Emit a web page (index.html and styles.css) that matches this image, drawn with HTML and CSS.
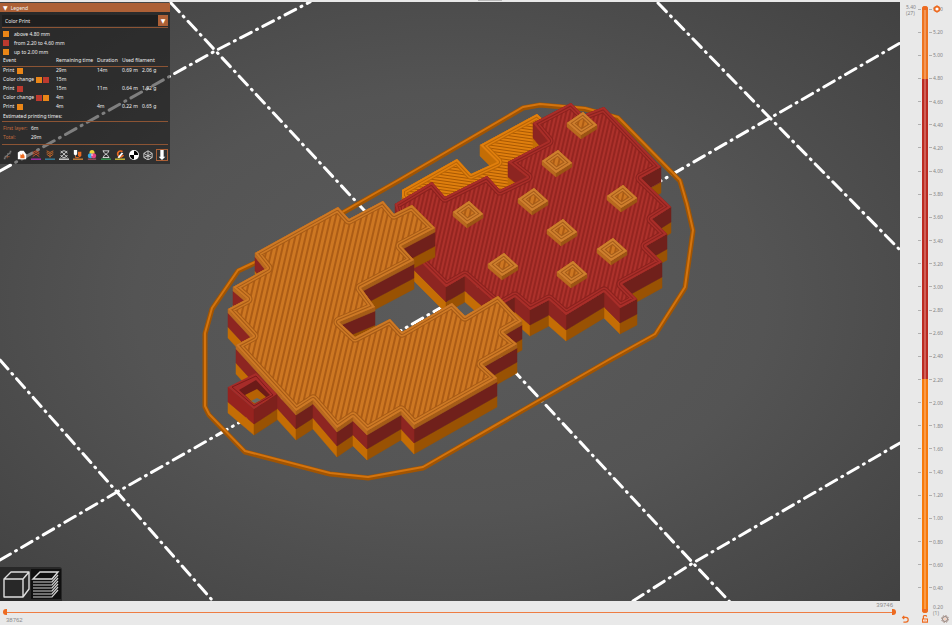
FILE: index.html
```html
<!DOCTYPE html>
<html lang="en">
<head>
  <meta charset="UTF-8">
  <meta name="viewport" content="width=device-width, initial-scale=1.0">
  <title>Preview</title>
  <link rel="stylesheet" href="styles.css">
</head>
<body>
  <div class="app">
    <main class="viewport">
      <svg class="scene" viewBox="0 2 900 599" preserveAspectRatio="xMidYMid slice" role="img" aria-label="Sliced model">
        <defs>
          <radialGradient id="bed" cx="50%" cy="50%" r="70%">
            <stop offset="0" stop-color="#5b5b5b"/>
            <stop offset="0.5" stop-color="#545454"/>
            <stop offset="1" stop-color="#424242"/>
          </radialGradient>
          <pattern id="hatch-top" width="5" height="5" patternUnits="userSpaceOnUse" patternTransform="rotate(13)">
            <rect width="5" height="5" fill="#cd7722"/>
            <rect width="2" height="5" fill="#ac5c15"/>
          </pattern>
          <pattern id="hatch-red" width="4" height="4" patternUnits="userSpaceOnUse" patternTransform="rotate(13)">
            <rect width="4" height="4" fill="#ad312b"/>
            <rect width="2" height="4" fill="#942520"/>
          </pattern>
          <pattern id="hatch-low" width="4" height="3" patternUnits="userSpaceOnUse" patternTransform="rotate(8)">
            <rect width="4" height="3" fill="#e07f0d"/>
            <rect width="4" height="1" fill="#a85803"/>
          </pattern>
        </defs>
        <rect y="2" width="900" height="599" fill="url(#bed)"/>
        <g class="grid-lines">
          <path d="M171 3L693 563L730 602"/>
          <path d="M658 3L770 118L900 250"/>
          <path d="M0 360L117 492L212 600"/>
          <path d="M0 560L117 492L402 330L770 118L900 43"/>
          <path d="M0 171L215 51L310 2"/>
          <path d="M633 601L693 563L900 443"/>
        </g>
        <g class="skirt">
          <path class="skirt-side" d="M255 263L238 271L212 309L205 334V407L209 415L245 452L330 474L368 478L423 468L610 360L655 335L685 288L693 231L687 205L680 181L618 118L585 109L540 105L523 108L400 180L255 263"/>
          <path class="skirt-top" d="M255 262L238 270L212 308L205 333V406L209 414L245 451L330 473L368 477L423 467L610 359L655 334L685 287L693 230L687 204L680 180L618 117L585 108L540 104L523 107L400 179L255 262"/>
        </g>
        <g id="model"></g>
      </svg>

      <section class="legend">
        <h1 class="legend-title"><span class="arrow">▼</span> Legend</h1>
        <div class="legend-body">
          <div class="combo">
            <select aria-label="View type">
              <option>Color Print</option>
            </select>
            <span class="combo-arrow">▼</span>
          </div>
          <ul class="colors">
            <li><i class="swatch orange"></i>above 4.80 mm</li>
            <li><i class="swatch red"></i>from 2.20 to 4.60 mm</li>
            <li><i class="swatch orange"></i>up to 2.00 mm</li>
          </ul>
          <table class="events">
            <colgroup>
              <col class="c-event">
              <col class="c-time">
              <col class="c-dur">
              <col class="c-len">
              <col>
            </colgroup>
            <thead>
              <tr><th>Event</th><th>Remaining time</th><th>Duration</th><th colspan="2">Used filament</th></tr>
            </thead>
            <tbody>
              <tr><td>Print <i class="swatch orange"></i></td><td>29m</td><td>14m</td><td>0.69 m</td><td>2.06 g</td></tr>
              <tr><td>Color change <i class="swatch orange"></i><i class="swatch red"></i></td><td>15m</td><td></td><td></td><td></td></tr>
              <tr><td>Print <i class="swatch red"></i></td><td>15m</td><td>11m</td><td>0.64 m</td><td>1.92 g</td></tr>
              <tr><td>Color change <i class="swatch red"></i><i class="swatch orange"></i></td><td>4m</td><td></td><td></td><td></td></tr>
              <tr><td>Print <i class="swatch orange"></i></td><td>4m</td><td>4m</td><td>0.22 m</td><td>0.65 g</td></tr>
            </tbody>
          </table>
          <h2 class="times-title">Estimated printing times:</h2>
          <dl class="times">
            <dt>First layer:</dt><dd>6m</dd>
            <dt>Total:</dt><dd>29m</dd>
          </dl>
          <div class="tools">
            <button aria-label="Travel"><svg viewBox="0 0 12 12"><path d="M1 10h2V7h3V4h3V1" stroke="#777" stroke-width="2" stroke-dasharray="2 1" fill="none"/><path d="M5 10V8h3" stroke="#a35533" fill="none"/></svg></button>
            <button aria-label="Wipe"><svg viewBox="0 0 12 12"><path d="M1 11V3l3-2h4l3 4v6z" fill="#fff"/><path d="M4 10V5l2 1 1-2 2 3v3z" fill="#ed6b21"/></svg></button>
            <button aria-label="Retractions"><svg viewBox="0 0 12 12"><path d="M2 3l4-2 4 2M2 5l4-2 4 2M2 8l4-3 4 3" stroke="#c4532d" stroke-width="1.2" fill="none"/><path d="M0 11h12" stroke="#b82fbd" stroke-width="1.5"/></svg></button>
            <button aria-label="Deretractions"><svg viewBox="0 0 12 12"><path d="M2 1l4 2 4-2M2 3l4 2 4-2M2 5l4 3 4-3M6 5v4" stroke="#bd6428" stroke-width="1.2" fill="none"/><path d="M0 11h12" stroke="#3d8fad" stroke-width="1.5"/></svg></button>
            <button aria-label="Seams"><svg viewBox="0 0 12 12"><path d="M2 1l8 8M10 1L2 9M2 4c2-4 6-4 8 0M2 6c2 4 6 4 8 0" stroke="#eee" fill="none"/><path d="M0 11h12" stroke="#eee" stroke-width="1.5"/></svg></button>
            <button aria-label="Tool changes"><svg viewBox="0 0 12 12"><path d="M1 0h4v5L3 7 1 5z" fill="#fff"/><path d="M6 2h4v5L8 9 6 7z" fill="#ed6b21"/><path d="M3 7v2h4" stroke="#ed6b21" fill="none"/><path d="M0 11h12" stroke="#e0903d" stroke-width="1.5"/></svg></button>
            <button aria-label="Color changes"><svg viewBox="0 0 12 12"><circle cx="6" cy="3" r="3" fill="#f0d43a"/><circle cx="4" cy="7" r="3" fill="#36a9e1"/><circle cx="8" cy="7" r="3" fill="#e24587"/><circle cx="6" cy="6" r="1" fill="#fff"/><path d="M1 11h10" stroke="#d56a7c"/></svg></button>
            <button aria-label="Pause prints"><svg viewBox="0 0 12 12"><path d="M2 1h8M2 9h8M3 1c0 3 2 3 3 4 1-1 3-1 3-4M3 9c0-3 2-3 3-4 1 1 3 1 3 4" stroke="#eee" fill="none"/><path d="M0 11h12" stroke="#35a853" stroke-width="1.5"/></svg></button>
            <button aria-label="Custom G-codes"><svg viewBox="0 0 12 12"><path d="M9 2a3.5 3.5 0 1 0 1 4" stroke="#ed6b21" stroke-width="2" fill="none"/><path d="M3 9l5-6 2 1-5 6z" fill="#fff"/><path d="M0 11h12" stroke="#ded33b" stroke-width="1.5"/></svg></button>
            <button aria-label="Center of gravity"><svg viewBox="0 0 12 12"><circle cx="6" cy="6" r="6" fill="#fff"/><path d="M6 6V1a5 5 0 0 1 5 5zM6 6v5a5 5 0 0 1-5-5z" fill="#000"/></svg></button>
            <button aria-label="Shells"><svg viewBox="0 0 12 12"><path d="M6 1l5 3v5l-5 3-5-3V4zM1 4l5 3 5-3M6 7v5M6 1v6L1 9M6 7l5 2" stroke="#ddd" fill="none"/></svg></button>
            <button class="active" aria-label="Tool marker"><svg viewBox="0 0 12 12"><path d="M4 0h4v8h2l-4 4-4-4h2z" fill="#fff"/></svg></button>
          </div>
        </div>
      </section>

      <nav class="views">
        <button aria-label="3D editor view">
          <svg viewBox="0 0 30 30"><path d="M3 10h19v18H3zM3 10l7-7h18l-6 7M28 3v17l-6 8" stroke="#ddd" stroke-width="1.4" fill="none" stroke-linejoin="round"/></svg>
        </button>
        <button class="active" aria-label="Preview">
          <svg viewBox="0 0 30 30"><path d="M2 10L9 3h18l-6 7z" stroke="#ddd" stroke-width="1.4" fill="none"/><path d="M2 13h19l6-7M2 16h19l6-7M2 19h19l6-7M2 22h19l6-7M2 25h19l6-7M2 28h19l6-7" stroke="#d0d0d0" stroke-width="1.2" fill="none"/></svg>
        </button>
      </nav>
    </main>

    <footer class="moves">
      <output class="move-high">39746</output>
      <div class="move-track">
        <input class="low" type="range" min="0" max="100" value="0" aria-label="First move">
        <input class="high" type="range" min="0" max="100" value="100" aria-label="Last move">
      </div>
      <output class="move-low">38762</output>
    </footer>

    <aside class="layers">
      <div class="layer-slider">
        <div class="layer-current">5.40<br>(27)</div>
        <div class="layer-track">
          <input class="low" type="range" min="1" max="27" value="1" aria-label="Bottom layer">
          <input class="high" type="range" min="1" max="27" value="27" aria-label="Top layer">
        </div>
        <ol class="layer-scale" id="scale"></ol>
        <button class="layer-settings" aria-label="Edit color"><svg viewBox="0 0 10 10"><circle cx="5" cy="5" r="3" fill="#fff" stroke="#ed6b21" stroke-width="2"/><path d="M5 0v2M5 8v2M0 5h2M8 5h2" stroke="#ed6b21"/></svg></button>
      </div>
      <div class="layer-bottom">0.20<br>(1)</div>
      <div class="layer-tools">
        <button aria-label="Discard changes"><svg viewBox="0 0 10 10"><path d="M3 3h3a2.5 2.5 0 0 1 0 6H3M4 1L2 3l2 2" stroke="#ed6b21" stroke-width="1.5" fill="none"/></svg></button>
        <button aria-label="One layer lock"><svg viewBox="0 0 10 10"><path d="M2 5h6v4H2z" fill="#fff" stroke="#ed6b21" stroke-width="1.5"/><path d="M3 5V3a2 2 0 0 1 4-1" stroke="#ed6b21" stroke-width="1.5" fill="none"/><path d="M5 6v2" stroke="#ed6b21"/></svg></button>
        <button aria-label="Slider settings"><svg viewBox="0 0 10 10"><circle cx="5" cy="5" r="3" fill="#fff" stroke="#a08c84" stroke-width="1.5"/><circle cx="5" cy="5" r="4.5" fill="none" stroke="#a08c84" stroke-dasharray="2 1.5"/><circle cx="5" cy="5" r="1" fill="#ed9a70"/></svg></button>
      </div>
    </aside>
  </div>
  <script src="script.js"></script>
</body>
</html>
```
FILE: styles.css
```css
* {
  box-sizing: border-box;
}

body {
  margin: 0;
  height: 100vh;
  background-color: #e9e9e9;
  font-family: "Noto Sans", "Open Sans", sans-serif;
  font-size: 5px;
  overflow: hidden;
}

button {
  display: flex;
  align-items: center;
  justify-content: center;
  padding: 0;
  border: none;
  background: none;
  cursor: pointer;
}

.app {
  display: grid;
  grid-template-columns: 1fr 52px;
  grid-template-rows: 1fr 24px;
  height: 100%;
  padding-top: 2px;
  background: linear-gradient(#b9b9b9, #b9b9b9) 51.5% 0 / 24px 1px no-repeat;
}

/* 3D view */
.viewport {
  position: relative;
  min-height: 0;
  overflow: hidden;
  background-color: #4a4a4a;
}

.scene {
  display: block;
  width: 100%;
  height: 100%;
}

.grid-lines path {
  fill: none;
  stroke: #fff;
  stroke-width: 3;
  stroke-linecap: round;
  stroke-dasharray: 12 6 1 6;
}

.skirt path {
  fill: none;
  stroke-linejoin: round;
}

.skirt-side {
  stroke: #a05403;
  stroke-width: 5;
}

.skirt-top {
  stroke: #d3740f;
  stroke-width: 2;
}

/* legend */
.legend {
  position: absolute;
  top: 1px;
  left: 0;
  width: 170px;
  background-color: rgba(22, 22, 22, 0.55);
  color: #eee;
}

.legend-title {
  display: flex;
  align-items: center;
  gap: 3px;
  height: 9px;
  margin: 0;
  padding-left: 3px;
  background-color: #ad6036;
  font-size: 5px;
  font-weight: normal;
}

.legend-title .arrow,
.combo-arrow {
  color: #fff;
  font-family: "DejaVu Sans", sans-serif;
  font-size: 6px;
}

.legend-body {
  padding: 3px 2px;
}

.combo {
  display: grid;
  grid-template-columns: 1fr 10px;
  height: 11px;
  margin-bottom: 1px;
  background-color: #1f1f1f;
}

.combo select {
  appearance: none;
  padding: 0 3px;
  border: none;
  background: none;
  color: #eee;
  font: inherit;
}

.combo-arrow {
  display: flex;
  align-items: center;
  justify-content: center;
  background-color: #ad6036;
}

.colors {
  margin: 0;
  padding: 1px 1px 0;
  border-top: 1px solid #8c5434;
  list-style: none;
}

.colors li {
  display: flex;
  align-items: center;
  gap: 4px;
  height: 9px;
}

.swatch {
  display: inline-block;
  width: 6px;
  height: 6px;
  margin-right: 1px;
  vertical-align: middle;
}

.orange {
  background-color: #ea8617;
}

.red {
  background-color: #bd3a2f;
}

.events {
  width: 100%;
  border-collapse: collapse;
  table-layout: fixed;
  line-height: 7px;
}

.events th,
.events td {
  height: 9px;
  padding: 0;
  font-weight: normal;
  text-align: left;
  white-space: nowrap;
}

.events thead th {
  height: 10px;
}

.events td:first-child,
.events th:first-child {
  padding-left: 1px;
}

.events .swatch {
  margin-left: 1px;
  margin-right: 0;
}

.events thead {
  border-bottom: 1px solid #8c5434;
}

.c-event {
  width: 54px;
}

.c-time {
  width: 41px;
}

.c-dur {
  width: 25px;
}

.c-len {
  width: 20px;
}

.times-title {
  height: 11px;
  margin: 0;
  padding-left: 1px;
  border-bottom: 1px solid #8c5434;
  font-size: 5px;
  font-weight: normal;
  line-height: 10px;
}

.times {
  display: grid;
  grid-template-columns: 28px 1fr;
  margin: 0;
  padding: 2px 1px;
  border-bottom: 1px solid #8c5434;
  line-height: 9px;
}

.times dt {
  color: #c06a3d;
}

.times dd {
  margin: 0;
}

.tools {
  display: flex;
  justify-content: space-between;
  padding-top: 4px;
}

.tools button {
  width: 12px;
  height: 12px;
}

.tools svg {
  width: 10px;
  height: 10px;
}

.tools .active {
  border: 1px solid #ad6036;
}

/* view switch */
.views {
  position: absolute;
  bottom: 0;
  left: 0;
  display: flex;
  padding: 2px 1px;
  background-color: #282828;
  border-radius: 0 3px 0 0;
}

.views button {
  width: 30px;
  height: 30px;
}

.views .active {
  background-color: #101010;
}

.views svg {
  width: 30px;
  height: 30px;
}

/* horizontal slider */
.moves {
  display: grid;
  grid-template-rows: 8px 6px 10px;
  padding: 0 4px 0 3px;
  color: #8c8c8c;
  font-family: "Liberation Sans", Arial, sans-serif;
  font-size: 6px;
}

.move-high {
  padding-right: 3px;
  text-align: right;
  line-height: 9px;
}

.move-low {
  padding-left: 3px;
  line-height: 10px;
}

.move-track {
  display: grid;
  background: linear-gradient(#ee7d43, #ee7d43) center / 100% 1px no-repeat;
}

input[type="range"] {
  grid-area: 1 / 1;
  appearance: none;
  margin: 0;
  background: none;
  pointer-events: none;
}

input[type="range"]::-webkit-slider-thumb {
  appearance: none;
  width: 4px;
  height: 6px;
  background-color: #ed6b21;
  pointer-events: auto;
}

.move-track input {
  width: 100%;
  height: 6px;
}

.move-track .low::-webkit-slider-thumb {
  border-radius: 4px 0 0 4px;
}

.move-track .high::-webkit-slider-thumb {
  border-radius: 0 4px 4px 0;
}

/* vertical slider */
.layers {
  display: grid;
  grid-template-rows: 1fr 12px;
  grid-row: 1 / 3;
  grid-column: 2;
  position: relative;
  color: #858585;
}

.layer-slider {
  display: grid;
  grid-template-columns: 18px 14px 1fr;
  min-height: 0;
  padding-top: 4px;
}

.layer-current {
  padding-left: 6px;
  line-height: 6px;
  margin-top: -2px;
}

.layer-track {
  display: grid;
  justify-self: center;
  width: 6px;
  border-radius: 3px;
  background:
    linear-gradient(rgba(255, 255, 255, 0.25), rgba(255, 255, 255, 0.25)) center / 2px 100% no-repeat,
    linear-gradient(#ee7420 12%, #bd2c22 12%, #bd2c22 61.5%, #f77a0c 61.5%);
}

.layer-track input {
  width: 6px;
  height: 100%;
  min-height: 0;
  writing-mode: vertical-lr;
  direction: rtl;
}

.layer-track input::-webkit-slider-thumb {
  width: 6px;
  height: 4px;
}

.layer-track .low::-webkit-slider-thumb {
  border-radius: 0 0 3px 3px;
}

.layer-track .high::-webkit-slider-thumb {
  border-radius: 3px 3px 0 0;
}

.layer-scale {
  display: flex;
  flex-direction: column;
  justify-content: space-between;
  margin: 0 0 22px -14px;
  padding: 0;
  list-style: none;
  line-height: 6px;
}

.layer-scale li {
  display: flex;
  align-items: center;
  height: 6px;
}

.layer-scale li::before,
.layer-scale li::after {
  content: "";
  order: 0;
  width: 3px;
  height: 1px;
  background-color: #b0b0b0;
}

.layer-scale li::after {
  order: 1;
  margin-left: 8px;
}

.layer-scale span {
  order: 2;
  padding-left: 1px;
}

.layer-settings {
  position: absolute;
  top: 3px;
  left: 33px;
  width: 8px;
  height: 8px;
}

.layer-settings svg {
  width: 8px;
  height: 8px;
}

.layer-bottom {
  position: absolute;
  right: 9px;
  bottom: 9px;
  line-height: 6px;
}

.layer-tools {
  display: flex;
  justify-content: space-between;
  padding-right: 2px;
}

.layer-tools button {
  width: 10px;
  height: 12px;
}

.layer-tools svg {
  width: 8px;
  height: 8px;
}
```
FILE: script.js
```js
const NS = 'http://www.w3.org/2000/svg';
const model = document.getElementById('model');
let clipCount = 0;

function add(parent, name, attrs) {
  const el = document.createElementNS(NS, name);
  for (const key in attrs) el.setAttribute(key, attrs[key]);
  parent.appendChild(el);
  return el;
}

// bands: [from, to, left facing colour, right facing colour]
const ORANGE_BASE = ['#c46d05', '#995203'];
const RED = ['#8d2521', '#70201b'];

// points go clockwise, so every edge that runs to the left faces the viewer
function walls(points, bands) {
  const edges = [];
  points.forEach((a, i) => {
    const b = points[(i + 1) % points.length];
    if (b[0] < a[0]) edges.push([a, b]);
  });
  edges.sort((e, f) => (e[0][1] + e[1][1]) - (f[0][1] + f[1][1]));
  for (const [a, b] of edges) {
    for (const [from, to, left, right] of bands) {
      const fill = b[1] < a[1] ? left : right;
      add(model, 'path', {
        d: `M${a[0]} ${a[1] + from}L${b[0]} ${b[1] + from}V${b[1] + to}L${a[0]} ${a[1] + to}Z`,
        fill, stroke: fill, 'stroke-width': 0.5
      });
    }
  }
}

// top layer: hatch with perimeter lines following the outline
function cap(points, fill, light, dark, lines) {
  const d = 'M' + points.map(p => p.join(' ')).join('L') + 'Z';
  const id = 'clip' + clipCount++;
  add(add(model, 'clipPath', { id }), 'path', { d });
  const g = add(model, 'g', { 'clip-path': `url(#${id})` });
  add(g, 'path', { d, fill });
  for (let i = lines; i > 0; i--) {
    add(g, 'path', { d, fill: 'none', stroke: dark, 'stroke-width': i * 5 + 1, 'stroke-linejoin': 'round' });
    add(g, 'path', { d, fill: 'none', stroke: light, 'stroke-width': i * 5 - 1, 'stroke-linejoin': 'round' });
  }
}

const low = [[402, 190], [457, 159], [471, 174], [497, 162], [480, 145], [537, 114], [560, 135], [560, 180], [430, 215], [402, 197]];
const body = [
  [395, 204], [432, 182], [445, 197], [487, 176], [500, 190], [527, 177], [508, 162], [548, 141],
  [533, 123], [571, 103], [583, 115], [604, 107], [661, 167], [641, 178], [671, 207], [652, 219],
  [667, 234], [646, 246], [662, 262], [622, 284], [637, 299], [620, 308], [604, 292], [566, 315],
  [549, 300], [530, 310], [515, 297], [499, 306], [465, 276], [446, 287], [407, 248]
];
const front = [
  [255, 253], [338, 207], [349, 219], [383, 201], [394, 214], [412, 205], [435, 228], [401, 246],
  [414, 260], [361, 288], [375, 307], [339, 322], [355, 337], [390, 319], [402, 332], [452, 303],
  [465, 316], [498, 296], [522, 321], [503, 332], [517, 344], [482, 364], [497, 378], [414, 425],
  [401, 411], [367, 431], [353, 417], [337, 428], [313, 400], [296, 411], [236, 345], [253, 336],
  [228, 309], [247, 299], [233, 287], [267, 268]
];
const pegs = [[582, 124], [557, 162], [533, 200], [622, 197], [468, 213], [562, 231], [612, 250], [503, 265], [572, 273]];

walls(low, [[0, 11, ...ORANGE_BASE]]);
cap(low, 'url(#hatch-low)', '#e07f0d', '#b96506', 2);

walls(body, [[15, 26, ...ORANGE_BASE], [0, 15, ...RED]]);
cap(body, 'url(#hatch-red)', '#a92e29', '#8a221e', 2);

for (const [x, y] of pegs) {
  const top = [[x - 15, y - 1], [x + 1, y - 12], [x + 15, y + 1], [x - 1, y + 11]];
  walls(top, [[0, 4, '#b86a1f', '#9c5514']]);
  cap(top, 'url(#hatch-top)', '#cf7f2e', '#a55d1a', 2);
}

walls(front, [[18, 29, ...ORANGE_BASE], [4, 18, ...RED], [0, 4, '#bb6b1f', '#a55c17']]);
cap(front, 'url(#hatch-top)', '#cd7925', '#a55a16', 2);

// key ring loop
const ring = [[228, 387], [256, 373], [277, 394], [254, 409]];
walls(ring, [[15, 26, ...ORANGE_BASE], [0, 15, '#96231f', '#7e211c']]);
add(model, 'path', { d: 'M228 387L256 373L277 394L254 409Z', fill: '#a72c29' });
add(model, 'path', { d: 'M232 387L256 376L273 395L254 406Z', fill: 'none', stroke: '#7e1b19' });
add(model, 'path', { d: 'M239 390L256 380L270 395L254 404Z', fill: '#6c1b18' });
add(model, 'path', { d: 'M245 395L257 389L266 397L254 404Z', fill: '#b66204' });
add(model, 'path', { d: 'M251 401L257 398L261 400L255 403Z', fill: '#666b68' });

const scale = document.getElementById('scale');
for (let layer = 27; layer > 1; layer--) {
  const li = document.createElement('li');
  const label = document.createElement('span');
  label.textContent = (layer * 0.2).toFixed(2);
  li.appendChild(label);
  scale.appendChild(li);
}
```
